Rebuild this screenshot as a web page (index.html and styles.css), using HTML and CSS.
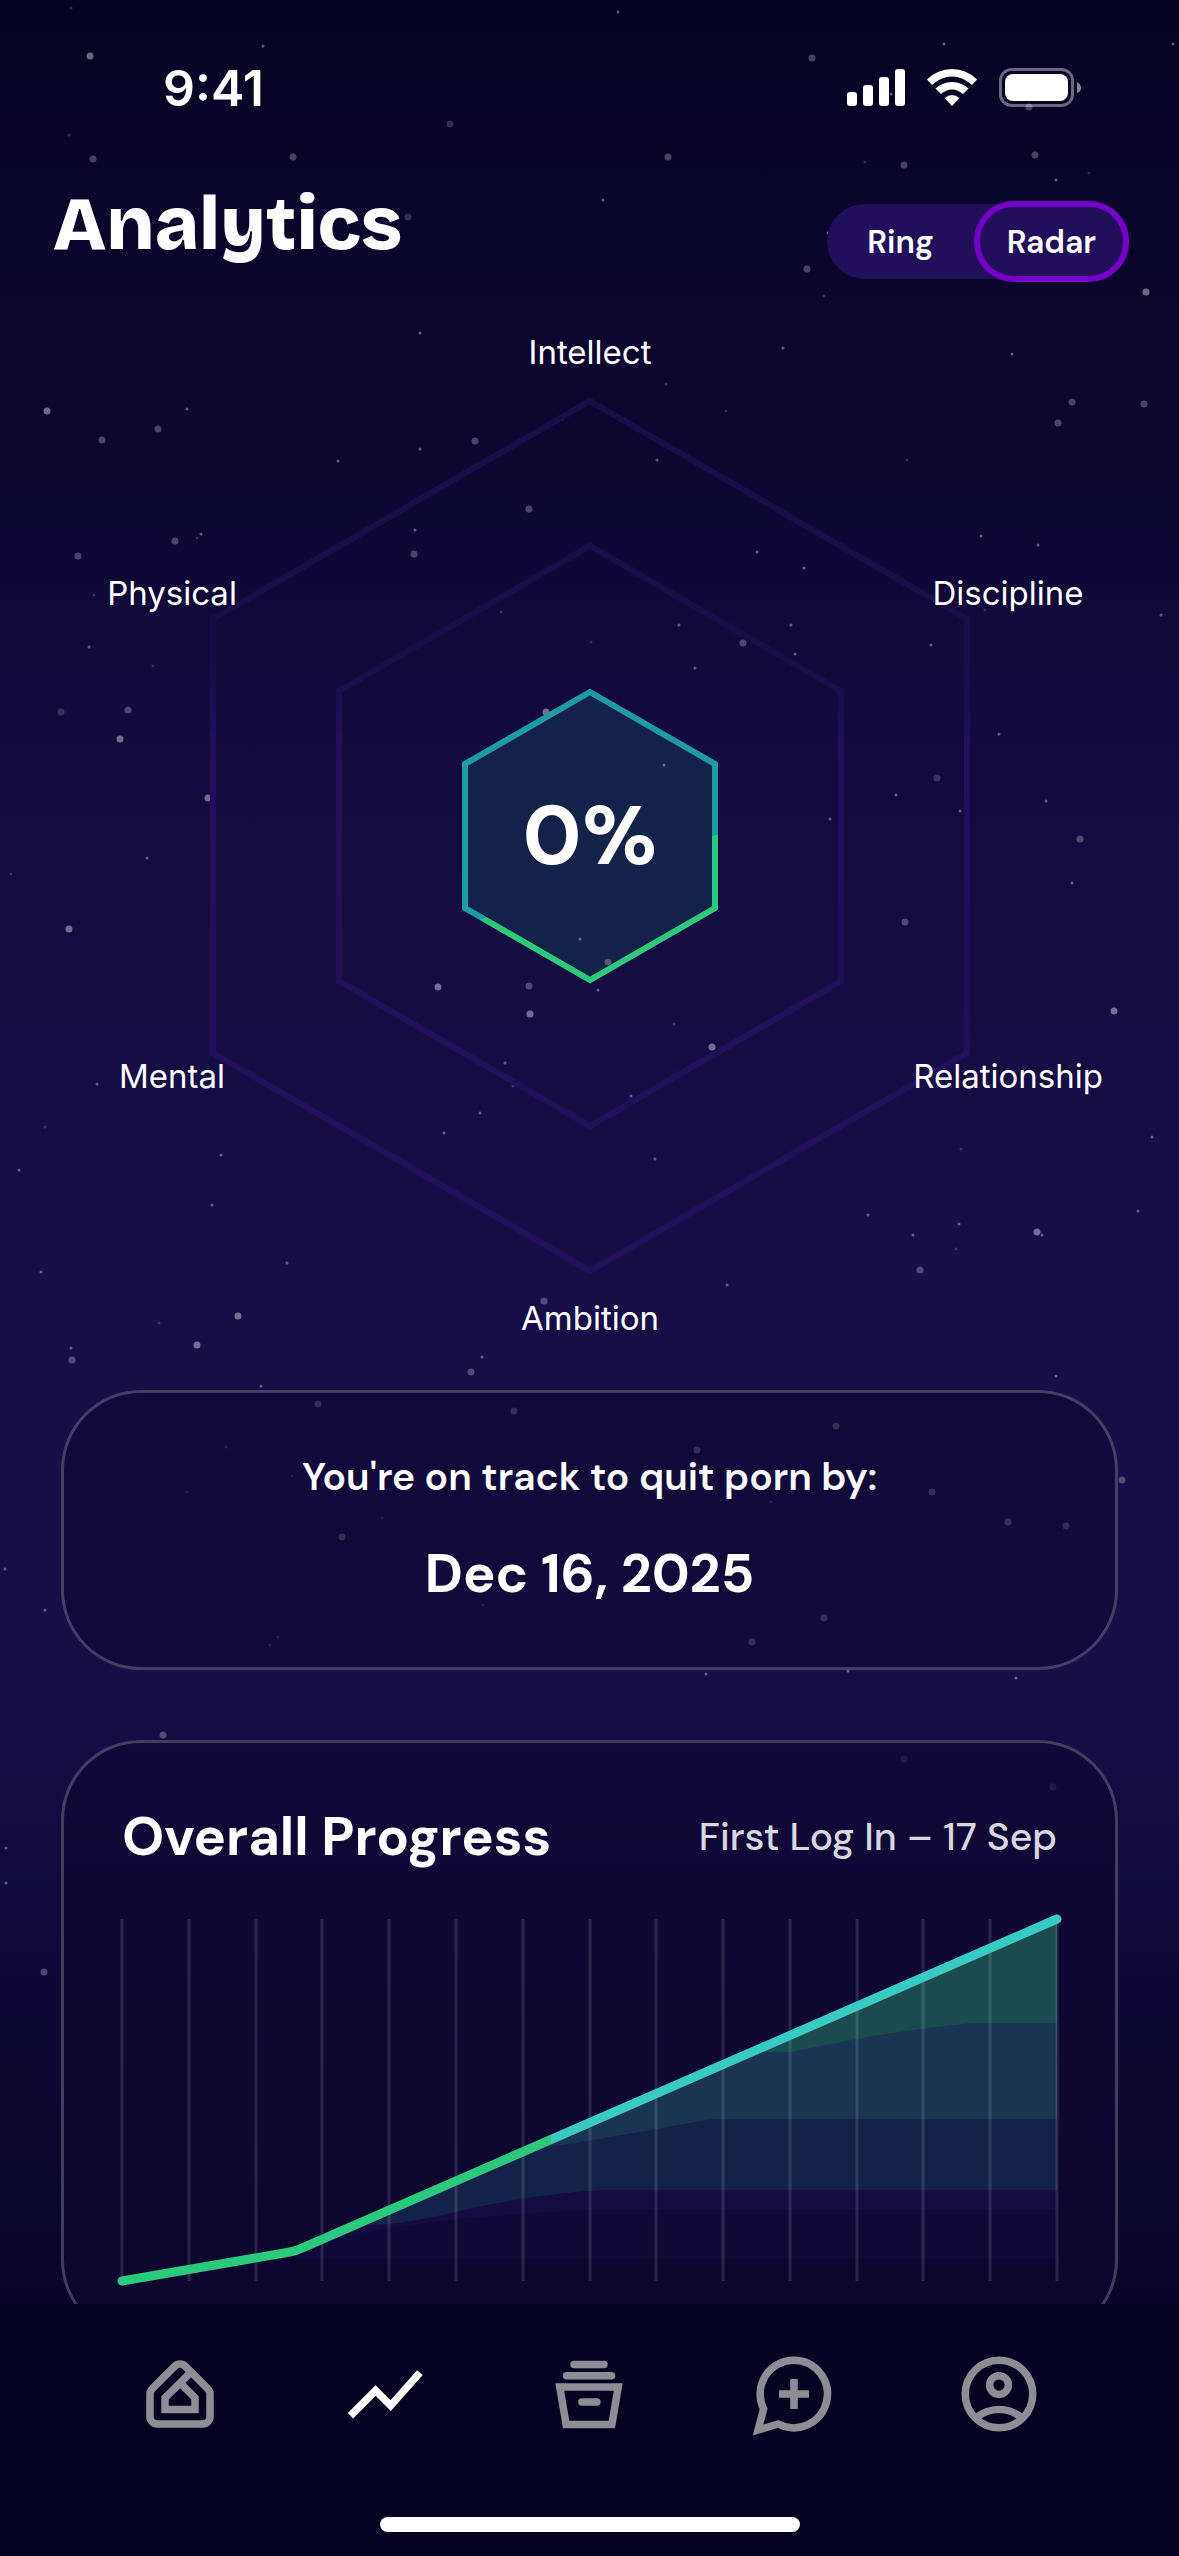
FILE: index.html
```
<!DOCTYPE html>
<html lang="en">
<head>
    <meta charset="UTF-8">
    <meta name="viewport" content="width=device-width, initial-scale=1.0">
    <title>Analytics</title>
    <link rel="stylesheet" href="styles.css">
</head>
<body>
    <!-- Starry background -->
    <svg class="stars" viewBox="0 0 1179 2556" preserveAspectRatio="xMidYMin slice" aria-hidden="true">
        <path class="star big bright" d="M90 56h0M1146 292h0M47 411h0M120 739h0M208 798h0M546 712h0M69 929h0M438 987h0M530 1014h0M712 1047h0M1114 1011h0M1037 1232h0M238 1316h0M197 1345h0"/>
        <path class="star big" d="M812 58h0M93 159h0M293 157h0M668 157h0M904 165h0M1035 155h0M807 269h0M1029 107h0M1072 402h0M1144 404h0M1058 423h0M158 429h0M102 440h0M475 441h0M529 509h0M175 541h0M78 556h0M414 554h0M743 643h0M128 710h0M1080 839h0M529 986h0M905 922h0M920 1270h0M544 1301h0M72 1360h0M471 1372h0M1122 1480h0M163 1735h0M44 1972h0M318 1404h0M514 1411h0M836 1426h0M697 1450h0M932 1492h0M1008 1522h0M1066 1526h0M342 1537h0M824 1618h0M752 1642h0M904 1759h0M1053 1787h0"/>
        <path class="star big dim" d="M450 124h0M408 217h0M61 712h0M937 778h0M577 352h0"/>
        <path class="star" d="M618 12h0M263 46h0M944 44h0M1173 44h0M891 94h0M1056 180h0M603 200h0M828 233h0M420 333h0M1012 354h0M187 409h0M562 419h0M420 449h0M338 461h0M657 460h0M415 530h0M201 534h0M981 536h0M1038 545h0M757 552h0M804 568h0M679 625h0M791 625h0M795 654h0M695 668h0M931 645h0M1161 615h0M89 647h0M999 734h0M896 795h0M1046 801h0M960 811h0M830 819h0M783 348h0M1072 883h0M598 990h0M505 1063h0M631 1096h0M97 1084h0M480 1113h0M444 1133h0M221 1155h0M19 1170h0M212 1205h0M655 1159h0M1152 1137h0M1138 1211h0M868 1215h0M959 1224h0M913 1235h0M1042 1235h0M287 1263h0M41 1272h0M727 1285h0M71 1348h0M482 1357h0M1056 1376h0M147 858h0M45 1610h0M5 1569h0M261 1386h0M706 1674h0M848 1671h0M1016 1678h0M6 1848h0M6 1883h0"/>
        <path class="star dim" d="M71 8h0M69 135h0M865 162h0M1089 173h0M824 296h0M666 384h0M726 411h0M907 460h0M94 595h0M197 538h0M501 612h0M591 642h0M153 666h0M985 610h0M45 1127h0M11 874h0M674 1024h0M961 1149h0M956 1249h0M159 1323h0M513 1086h0M226 1447h0M187 1492h0M292 1476h0M382 1518h0M771 1502h0M483 1605h0M278 1637h0M270 1645h0"/>
    </svg>

    <div class="status_bar">
        <span class="time">9:41</span>
        <div class="status_icons">
            <svg width="58" height="38" viewBox="0 0 58 38" fill="#fff" aria-hidden="true">
                <rect x="0" y="23" width="10" height="14" rx="3"/>
                <rect x="16" y="16" width="10" height="21" rx="3"/>
                <rect x="32" y="8" width="10" height="29" rx="3"/>
                <rect x="48" y="0" width="10" height="37" rx="3"/>
            </svg>
            <svg width="50" height="38" viewBox="0 0 50 38" fill="#fff" aria-hidden="true">
                <path d="M0 10.500Q10.500 0 25 0T50 10.500L45 16Q36 7.500 25 7.500T5 16z"/>
                <path d="M8.500 19.500Q15.500 13 25 13T41.500 19.500L36 25Q31 20.500 25 20.500T14 25z"/>
                <path d="M17.500 29Q25 23 32.500 29L25 37z"/>
            </svg>
            <svg width="82" height="40" viewBox="0 0 82 40" aria-hidden="true">
                <rect x="1.500" y="1.500" width="72" height="36" rx="11" fill="none" stroke="#fff" stroke-opacity=".4" stroke-width="3"/>
                <rect x="6" y="6" width="63" height="27" rx="8" fill="#fff"/>
                <path d="M78 14q4 2 4 6t-4 5z" fill="#fff" fill-opacity=".5"/>
            </svg>
        </div>
    </div>

    <header>
        <h1>Analytics</h1>
        <div class="toggle">
            <button type="button">Ring</button>
            <button type="button" class="active">Radar</button>
        </div>
    </header>

    <main>
        <svg class="radar" viewBox="-590 -528 1179 1056" role="img" aria-label="Radar chart">
            <defs>
                <linearGradient id="grid" gradientUnits="userSpaceOnUse" x1="0" y1="-435" x2="0" y2="435">
                    <stop offset=".3" stop-color="#170e48"/>
                    <stop offset=".4" stop-color="#220f5c"/>
                </linearGradient>
                <linearGradient id="score" gradientUnits="userSpaceOnUse" x1="0" y1="0" x2="28" y2="78">
                    <stop offset=".5" stop-color="#1d9ba2"/>
                    <stop offset=".5" stop-color="#2bc97c"/>
                </linearGradient>
            </defs>
            <path class="ring" d="M0-435L377-217V217L0 435L-377 217V-217z"/>
            <path class="ring" d="M0-290L251-145V145L0 290L-251 145V-145z"/>
            <path class="value" d="M0-144L125-72V72L0 144L-125 72V-72z"/>
            <!-- Stars that show through the filled hexagon -->
            <path class="star" d="M74-71h0M-10 103h0"/>
            <path class="star big" d="M18 126h0"/>
            <text class="percent" x="0" y="28">0%</text>
            <text x="0" y="-472">Intellect</text>
            <text x="418" y="-231">Discipline</text>
            <text x="418" y="252">Relationship</text>
            <text x="0" y="494">Ambition</text>
            <text x="-418" y="252">Mental</text>
            <text x="-418" y="-231">Physical</text>
        </svg>

        <section class="card goal">
            <p>You're on track to quit porn by:</p>
            <strong>Dec 16, 2025</strong>
        </section>

        <section class="card progress">
            <div class="card_top">
                <h2>Overall Progress</h2>
                <span>First Log In – 17 Sep</span>
            </div>
            <svg class="chart" viewBox="0 0 935 362" role="img" aria-label="Overall progress chart">
                <defs>
                    <linearGradient id="line" gradientUnits="userSpaceOnUse" x1="0" y1="0" x2="858" y2="0">
                        <stop offset=".5" stop-color="#2bc97c"/>
                        <stop offset=".5" stop-color="#38cbc3"/>
                    </linearGradient>
                </defs>
                <!-- Area under the line, lowest band first -->
                <path fill="#100937" d="M173 332L935 0V340H173z"/>
                <path fill="#140b41" d="M220 311L935 0V291H470Q330 296 220 318z"/>
                <path fill="#132248" d="M240 303L935 0V271H480Q400 276 320 296Q280 306 240 306z"/>
                <path fill="#1a3553" d="M420 224L935 0V200H590L535 210L440 226L420 228z"/>
                <path fill="#1a4c4f" d="M630 133L935 0V104H850Q790 110 735 120L668 133z"/>
                <path class="grid_lines" d="M0 0V362M67 0V362M134 0V362M200 0V362M267 0V362M334 0V362M401 0V362M468 0V362M534 0V362M601 0V362M668 0V362M735 0V362M801 0V362M868 0V362M935 0V362"/>
                <path class="line" d="M0 362L168 333Q174 332 180 329L935 0"/>
            </svg>
        </section>
    </main>

    <nav>
        <div class="tabs">
            <a href="#" aria-label="Home">
                <svg viewBox="0 0 24 24"><path d="M10.600 4.600a2 2 0 0 1 2.800 0l6 6a2 2 0 0 1 .6 1.400V18a2 2 0 0 1-2 2H6a2 2 0 0 1-2-2v-6a2 2 0 0 1 .6-1.400zM14.500 6.600L8 13v3.100h8V13l-4-4"/></svg>
            </a>
            <a href="#" class="active" aria-label="Analytics">
                <svg viewBox="0 0 24 24"><path d="M2.800 17.800L9.500 11.100L13.500 15.100L21.300 6.300"/></svg>
            </a>
            <a href="#" aria-label="Library">
                <svg viewBox="0 0 24 24"><path stroke-linecap="round" d="M8 4.100h8M6 7.100h12M10.100 14.100h4"/><path d="M4.200 10.100h15.600L18.100 20.100H5.900z"/></svg>
            </a>
            <a href="#" aria-label="Chat">
                <svg viewBox="0 0 24 24"><path d="M12 3a9 9 0 1 1-4.200 17L2.400 21.600L3.900 16A9 9 0 0 1 12 3zM12 8v8M8 12h8"/></svg>
            </a>
            <a href="#" aria-label="Profile">
                <svg viewBox="0 0 24 24"><circle cx="12" cy="12" r="9"/><circle cx="12" cy="9.600" r="2.500"/><path d="M5.800 18.400A10 10 0 0 1 12 16.100A10 10 0 0 1 18.200 18.400"/></svg>
            </a>
        </div>
        <div class="home_bar"></div>
    </nav>
</body>
</html>
```
FILE: styles.css
```
* {
    margin: 0;
    padding: 0;
    box-sizing: border-box;
}
body {
    position: relative;
    min-height: 100vh;
    overflow-x: hidden;
    background: linear-gradient(#040220 0, #090428 5%, #0c062f 16%, #100939 24%, #150c42 37%, #170e48 50%, #170e48 65%, #100939 76%, #0a0529 88%, #080424 100%);
    color: white;
    font-family: "DM Sans", Inter, Arial, sans-serif;
    font-optical-sizing: none;
}
.stars {
    position: absolute;
    top: 0;
    left: 0;
    width: 100%;
    height: 100%;
    z-index: -1;
}
.star {
    stroke: #fff;
    stroke-width: 3;
    stroke-linecap: round;
    opacity: .35;
}
.big {
    stroke-width: 7;
    opacity: .25;
}
.bright {
    opacity: .4;
}
.dim {
    opacity: .16;
}
.status_bar {
    display: flex;
    justify-content: space-between;
    align-items: center;
    height: 176px;
    padding: 0 98px 0 163px;
}
.time {
    font-family: Inter, Arial, sans-serif;
    font-size: 50px;
    font-weight: 600;
}
.status_icons {
    display: flex;
    align-items: center;
    gap: 22px;
}
header {
    display: flex;
    justify-content: space-between;
    align-items: flex-start;
    height: 132px;
    padding: 0 50px 0 53px;
}
h1 {
    font-family: "Bricolage Grotesque", "DM Sans", Inter, Arial, sans-serif;
    font-size: 75px;
    font-weight: 800;
    line-height: 96px;
}
.toggle {
    display: flex;
    align-items: center;
    height: 75px;
    margin-top: 28px;
    border-radius: 40px;
    background-color: #220f5c;
}
.toggle button {
    height: 81px;
    padding: 0 34px;
    border: 6px solid transparent;
    border-radius: 40px;
    background: none;
    color: white;
    font: 600 32px "DM Sans", Inter, Arial, sans-serif;
    font-optical-sizing: none;
    cursor: pointer;
}
.toggle .active {
    padding: 0 27px;
    border-color: #7600c8;
    background-color: #220f5c;
}
.radar {
    display: block;
    width: 100%;
}
.radar text {
    fill: #fff;
    font-family: Inter, Arial, sans-serif;
    font-size: 33px;
    text-anchor: middle;
}
.radar .percent {
    font-family: "DM Sans", Inter, Arial, sans-serif;
    font-size: 84px;
    font-weight: 700;
}
.ring {
    fill: none;
    stroke: url(#grid);
    stroke-width: 6;
}
.value {
    fill: #132248;
    stroke: url(#score);
    stroke-width: 6;
}
main {
    padding-bottom: 252px;
    margin-bottom: -36px;
}
.card {
    margin: 0 61px;
    padding: 58px;
    border: 3px solid rgba(255, 255, 255, .22);
    border-radius: 80px;
    background-color: rgba(8, 3, 34, .4);
}
.goal {
    margin-top: 26px;
    height: 280px;
    text-align: center;
}
.goal p {
    font-size: 39px;
    font-weight: 600;
    line-height: 52px;
}
.goal strong {
    display: block;
    margin-top: 39px;
    font-size: 54px;
    line-height: 64px;
}
.progress {
    margin-top: 70px;
    height: 600px;
    background: linear-gradient(rgba(15, 8, 52, .7), rgba(13, 7, 48, .8));
}
.card_top {
    display: flex;
    justify-content: space-between;
    align-items: center;
    height: 70px;
    margin-bottom: 48px;
}
.card_top h2 {
    font-size: 54px;
    font-weight: 700;
}
.card_top span {
    color: #d9d7e0;
    font-size: 39px;
    font-weight: 500;
}
.chart {
    display: block;
    width: 100%;
    overflow: visible;
}
.grid_lines {
    stroke: rgba(255, 255, 255, .12);
    stroke-width: 3;
}
.line {
    fill: none;
    stroke: url(#line);
    stroke-width: 9;
    stroke-linecap: round;
}
nav {
    position: fixed;
    left: 0;
    bottom: 0;
    width: 100%;
    height: 252px;
    padding: 45px 78px 24px;
    display: flex;
    flex-direction: column;
    justify-content: space-between;
    align-items: center;
    background-color: #040220;
}
.tabs {
    display: flex;
    width: 100%;
}
.tabs a {
    flex: 1;
    display: flex;
    justify-content: center;
    color: #8e8c95;
}
.tabs .active {
    color: white;
}
.tabs svg {
    width: 90px;
    height: 90px;
    fill: none;
    stroke: currentColor;
    stroke-width: 2;
}
.home_bar {
    width: 420px;
    height: 15px;
    border-radius: 8px;
    background-color: white;
}
```
